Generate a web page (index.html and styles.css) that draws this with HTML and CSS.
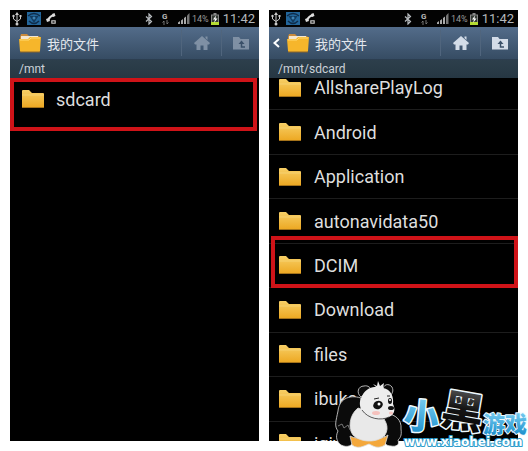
FILE: index.html
```
<!DOCTYPE html>
<html lang="zh-CN">
<head>
    <meta charset="UTF-8">
    <meta name="viewport" content="width=device-width, initial-scale=1.0">
    <title>我的文件</title>
    <link rel="stylesheet" href="styles.css">
</head>
<body>
    <!-- Shared icons -->
    <svg class="sprite" aria-hidden="true">
        <defs>
            <linearGradient id="folderFill" x1="0" y1="0" x2="0" y2="1">
                <stop offset="0" stop-color="#f7cf66" />
                <stop offset="1" stop-color="#eda924" />
            </linearGradient>
            <linearGradient id="blueFill" x1="0" y1="0" x2="0" y2="1">
                <stop offset="0" stop-color="#8fdcfa" />
                <stop offset="1" stop-color="#1188c8" />
            </linearGradient>
            <linearGradient id="blackFill" x1="0" y1="0" x2="0" y2="1">
                <stop offset="0" stop-color="#777" />
                <stop offset="0.5" stop-color="#151515" />
                <stop offset="1" stop-color="#000" />
            </linearGradient>
        </defs>
        <symbol id="folder" viewBox="0 0 22 18">
            <path d="M0 1 Q0 0 1 0 H7 L10 3 H21 Q22 3 22 4 V17 H0 Z" fill="url(#folderFill)" />
            <path d="M0 5 H22" stroke="#f9dc86" stroke-width="1" opacity="0.6" />
            <path d="M0 17.500 H22" stroke="#a5731a" />
        </symbol>
        <symbol id="folder-open" viewBox="0 0 22 19">
            <path d="M1 3 L2 0 H8 L10 2 H20 L21 4 V9 H1 Z" fill="#c98a3c" />
            <path d="M2 2 H19 V7 H2 Z" fill="#f4e6cf" />
            <path d="M0 5 H9 L11 3 H22 L21 17 Q21 18 20 18 H2 Q1 18 1 17 Z" fill="#f6b62b" />
            <path d="M1 6 H10 L12 4 H21" fill="none" stroke="#ffd973" />
            <path d="M1 18 H21" stroke="#8c6428" />
        </symbol>
        <symbol id="home" viewBox="0 0 16 16">
            <path d="M8 1 L16 8 L15 9.500 H13.500 V15 H9.500 V10.500 H6.500 V15 H2.500 V9.500 H1 L0 8 Z M11.500 1.500 H13.500 V5 L11.500 3 Z" fill="currentColor" />
        </symbol>
        <symbol id="folder-up" viewBox="0 0 16 14">
            <path d="M0 1 H6 L7.500 3 H16 V13.500 H0 Z" fill="currentColor" />
            <path d="M12 11 H8.500 V7" fill="none" stroke="#3a5069" stroke-width="1.500" />
            <path d="M5.500 8 L8.500 4.500 L11.500 8 Z" fill="#3a5069" />
        </symbol>
        <symbol id="usb" viewBox="0 0 10 14">
            <path d="M5 2 V12 M1.500 4 V7 L5 9.500 L8.500 7 V4" fill="none" stroke="#ccc" />
            <path d="M5 0 L7 3 H3 Z" fill="#ccc" />
            <circle cx="5" cy="12" r="1.500" fill="#ccc" />
            <circle cx="1.500" cy="4" r="1.200" fill="#ccc" />
            <path d="M7.500 3 H9.500 V5 H7.500 Z" fill="#ccc" />
        </symbol>
        <symbol id="app" viewBox="0 0 14 13">
            <rect width="14" height="13" fill="#23669b" />
            <path d="M1 4 Q7 -1 13 4 M2 9 Q7 14 12 9" fill="none" stroke="#102c49" stroke-width="1.500" />
            <path d="M2.500 4 L7 11 L11.500 4 Z" fill="#123a5e" />
            <circle cx="7" cy="6" r="1.500" fill="#3f82b4" />
        </symbol>
        <symbol id="call" viewBox="0 0 11 12">
            <path d="M8 2 Q4 3 2 7" fill="none" stroke="#ddd" stroke-width="2" />
            <path d="M6 1 L8.500 0 L9.500 3 L7 4 Z M0 6 L3 5 L4 8 L1 9 Z" fill="#ddd" />
            <rect x="5" y="7" width="5" height="4" rx="1" fill="#999" />
            <circle cx="7.500" cy="9" r="1" fill="#444" />
        </symbol>
        <symbol id="bluetooth" viewBox="0 0 8 12">
            <path d="M1 3.500 L6.500 8.500 L4 11 V1 L6.500 3.500 L1 8.500" fill="none" stroke="#b8bcc0" stroke-width="1.200" />
        </symbol>
        <symbol id="data" viewBox="0 0 7 5">
            <path d="M2 5 V1 M0.500 2.500 L2 1 M5 0 V4 M6.500 2.500 L5 4" fill="none" stroke="#777" />
        </symbol>
        <symbol id="signal" viewBox="0 0 12 11">
            <path d="M0 11 V9.500 L2 8 V11 Z M3 11 V7.500 L5 6 V11 Z M6 11 V5 L8 3.500 V11 Z" fill="#aaa" />
            <path d="M9 11 V2.500 L11.500 0 V11 Z" fill="#777" />
        </symbol>
        <symbol id="battery" viewBox="0 0 8 12">
            <path d="M2.500 0 H5.500 V1.500 H8 V12 H0 V1.500 H2.500 Z" fill="#888" />
            <rect x="1" y="2.500" width="6" height="7" fill="#353b35" />
            <rect x="0" y="9" width="8" height="3" fill="#b4dc32" />
            <path d="M5 2.500 L2 6.500 H4 L3 10 L6.500 5.500 H4.500 Z" fill="#fff" />
        </symbol>
        <symbol id="back" viewBox="0 0 7 10">
            <path d="M6 1 L1.500 5 L6 9" fill="none" stroke="#fff" stroke-width="2" />
        </symbol>
    </svg>

    <main class="screens">
        <section class="phone">
            <div class="status-bar">
                <svg class="icon-usb"><use href="#usb" /></svg>
                <svg class="icon-app"><use href="#app" /></svg>
                <svg class="icon-call"><use href="#call" /></svg>
                <div class="status-right">
                    <svg class="icon-bluetooth"><use href="#bluetooth" /></svg>
                    <span class="network">G<svg><use href="#data" /></svg></span>
                    <svg class="icon-signal"><use href="#signal" /></svg>
                    <span class="charge">14%</span>
                    <svg class="icon-battery"><use href="#battery" /></svg>
                    <span class="clock">11:42</span>
                </div>
            </div>
            <header class="title-bar">
                <svg class="icon-title"><use href="#folder-open" /></svg>
                <h1>我的文件</h1>
                <button class="action" aria-label="Home" disabled><svg><use href="#home" /></svg></button>
                <button class="action action-up" aria-label="Up" disabled><svg><use href="#folder-up" /></svg></button>
            </header>
            <div class="path">/mnt</div>
            <div class="root-item marked">
                <svg class="icon-folder"><use href="#folder" /></svg>
                <span>sdcard</span>
            </div>
        </section>

        <section class="phone">
            <div class="status-bar">
                <svg class="icon-usb"><use href="#usb" /></svg>
                <svg class="icon-app"><use href="#app" /></svg>
                <svg class="icon-call"><use href="#call" /></svg>
                <div class="status-right">
                    <svg class="icon-bluetooth"><use href="#bluetooth" /></svg>
                    <span class="network">G<svg><use href="#data" /></svg></span>
                    <svg class="icon-signal"><use href="#signal" /></svg>
                    <span class="charge">14%</span>
                    <svg class="icon-battery"><use href="#battery" /></svg>
                    <span class="clock">11:42</span>
                </div>
            </div>
            <header class="title-bar has-back">
                <button class="back" aria-label="Back"><svg><use href="#back" /></svg></button>
                <svg class="icon-title"><use href="#folder-open" /></svg>
                <h1>我的文件</h1>
                <button class="action" aria-label="Home"><svg><use href="#home" /></svg></button>
                <button class="action action-up" aria-label="Up"><svg><use href="#folder-up" /></svg></button>
            </header>
            <div class="path">/mnt/sdcard</div>
            <div class="file-view">
                <ul class="file-list">
                    <li><svg class="icon-folder"><use href="#folder" /></svg>AllsharePlayLog</li>
                    <li><svg class="icon-folder"><use href="#folder" /></svg>Android</li>
                    <li><svg class="icon-folder"><use href="#folder" /></svg>Application</li>
                    <li><svg class="icon-folder"><use href="#folder" /></svg>autonavidata50</li>
                    <li class="selected"><svg class="icon-folder"><use href="#folder" /></svg>DCIM</li>
                    <li><svg class="icon-folder"><use href="#folder" /></svg>Download</li>
                    <li><svg class="icon-folder"><use href="#folder" /></svg>files</li>
                    <li><svg class="icon-folder"><use href="#folder" /></svg>ibuka</li>
                    <li><svg class="icon-folder"><use href="#folder" /></svg>iqiyi</li>
                </ul>
            </div>
        </section>

        <!-- Site watermark -->
        <svg class="watermark" viewBox="0 0 194 70">
            <g stroke="#ddd" stroke-width="0.800">
                <path d="M27 17 C14 13 5 19 4 30 C2 40 0 45 4 50 C1 56 3 61 7 64 C13 67 19 65 20 59 L28 50 Z" fill="#0b0b0b" />
                <path d="M53 33 C61 33 68 39 67 48 C68 55 66 57 64 59 C66 64 62 66 57 65 C52 65 50 62 51 58 L48 43 Z" fill="#0b0b0b" />
                <path d="M16 55 C23 59 47 60 54 54 L51 64 Q45 68 39 65 L35 63 L30 65 Q23 68 18 64 Z" fill="#f4a83b" />
                <path d="M24 27 C15 34 14 48 19 54 C27 62 44 62 51 54 C56 46 51 38 46 34 Z" fill="#e9e9e9" />
                <path d="M27 16 C22 12 24 5 30 5 C34 4 37 7 37 9 Z" fill="#0b0b0b" />
                <path d="M49 9 C49 3 55 2 58 6 C60 10 58 13 56 15 Z" fill="#0b0b0b" />
            </g>
            <path d="M28 15 C32 7 38 6 42 6 L39 3 L43 5 L44 0 L46 5 L50 2 L49 7 C57 8 60 16 59 23 C62 29 60 34 55 36 C47 40 34 38 29 31 C25 26 25 20 28 15 Z" fill="#ededed" />
            <path d="M28 29 C34 38 47 40 55 36" fill="none" stroke="#333" stroke-width="0.800" />
            <ellipse cx="44" cy="24" rx="5" ry="4" transform="rotate(-25 44 24)" fill="#111" />
            <circle cx="45" cy="23" r="1.500" fill="#fff" />
            <ellipse cx="56" cy="20" rx="2" ry="3" fill="#111" />
            <circle cx="56" cy="19" r="1" fill="#fff" />
            <ellipse cx="57" cy="27" rx="3" ry="2" fill="#111" />
            <ellipse cx="42" cy="32" rx="4" ry="2" fill="#f5c1bd" />
            <ellipse cx="57" cy="32" rx="2" ry="1.500" fill="#f5c1bd" />
            <path d="M40 18 L45 17 M53 15 L56 15" fill="none" stroke="#222" />
            <path d="M4 45 L8 43 L10 47 L14 44 L16 49" fill="none" stroke="#777" />
            <text class="brand" x="70" y="48" font-size="35" fill="url(#blueFill)" transform="rotate(5 86 32)">小</text>
            <text class="brand" x="108" y="46" font-size="42" fill="url(#blackFill)" transform="rotate(10 129 30)">黑</text>
            <text class="brand brand-small" x="149" y="51" font-size="22" fill="url(#blueFill)">游戏</text>
            <text class="site" x="70" y="65" font-size="12">www.xiaohei.com</text>
        </svg>
    </main>
</body>
</html>
```
FILE: styles.css
```
:root {
    --mark: #cf1318;
    --text: #dedede;
    --bar-top: #536c8a;
    --bar-bottom: #364c63;
}

* {
    box-sizing: border-box;
    margin: 0;
    padding: 0;
}

body {
    background: #fff;
    color: var(--text);
    font-family: Roboto, "Noto Sans CJK SC", sans-serif;
}

svg {
    flex: none;
    display: block;
}

.sprite {
    position: absolute;
    width: 0;
    height: 0;
}

.screens {
    position: relative;
    display: flex;
    gap: 10px;
    padding: 10px;
}

.phone {
    flex: 1;
    min-width: 0;
    background: #000;
}

/* Status bar */
.status-bar {
    display: flex;
    align-items: center;
    gap: 5px;
    height: 17px;
    padding: 0 4px 0 2px;
    background: #030303;
}

.icon-usb { width: 10px; height: 14px; }
.icon-app { width: 14px; height: 13px; }
.icon-call { width: 11px; height: 12px; }
.icon-bluetooth { width: 8px; height: 12px; }
.icon-signal { width: 12px; height: 11px; }
.icon-battery { width: 8px; height: 12px; }

.status-right {
    display: flex;
    align-items: center;
    margin-left: auto;
}

.network {
    width: 8px;
    margin: 0 8px 0 9px;
    color: #bbb;
    font-size: 8px;
    font-weight: 700;
    line-height: 7px;
}

.network svg {
    width: 7px;
    height: 5px;
}

.charge {
    margin: 0 2px;
    color: #999;
    font-size: 9px;
}

.clock {
    margin-left: 4px;
    color: #b4b8bc;
    font-size: 13px;
    line-height: 16px;
}

/* Title bar */
.title-bar {
    display: flex;
    align-items: center;
    height: 33px;
    padding-left: 9px;
    background: linear-gradient(var(--bar-top), var(--bar-bottom));
    border-bottom: 1px solid #2c3e50;
}

.title-bar.has-back {
    padding-left: 0;
}

.icon-title {
    width: 22px;
    height: 19px;
}

.title-bar h1 {
    flex: 1;
    margin-left: 6px;
    color: #e4e8ee;
    font-size: 13px;
    font-weight: 400;
}

.back {
    width: 18px;
    height: 32px;
    padding-left: 4px;
    border: 0;
    background: none;
}

.back svg {
    width: 7px;
    height: 10px;
}

.action {
    display: flex;
    align-items: center;
    justify-content: center;
    width: 40px;
    height: 26px;
    border: 0;
    border-left: 1px solid #50657d;
    background: none;
    color: #d3dce8;
}

.action:disabled {
    color: #7f90a4;
}

.action-up {
    width: 38px;
}

.action svg {
    width: 16px;
    height: 16px;
}

.path {
    height: 18px;
    padding-left: 9px;
    background: linear-gradient(#2d3f4c, #263743);
    color: #ccd2d8;
    font-size: 12px;
    line-height: 18px;
}

/* Folders */
.icon-folder {
    width: 22px;
    height: 18px;
}

.marked {
    border: 4px solid var(--mark);
}

.root-item {
    display: flex;
    gap: 12px;
    height: 53px;
    margin-right: 2px;
    padding: 8px;
    font-size: 18px;
    line-height: 20px;
}

.file-view {
    height: 363px;
    overflow: hidden;
}

.file-list {
    display: grid;
    grid-template-rows: repeat(9, 1fr);
    height: 400px;
    margin-top: -12px;
    list-style: none;
}

.file-list li {
    position: relative;
    display: flex;
    align-items: center;
    gap: 13px;
    padding-left: 10px;
    border-bottom: 1px solid #1d1d1d;
    font-size: 18px;
}

.selected::after {
    content: '';
    position: absolute;
    inset: -8px 0 -1px 2px;
    border: 4px solid var(--mark);
}

/* Watermark */
.watermark {
    position: absolute;
    right: 0;
    bottom: 0;
    width: 194px;
    height: 70px;
}

.brand {
    font-family: "Noto Sans CJK SC", sans-serif;
    font-weight: 900;
    stroke: #eefaff;
    stroke-width: 3px;
    stroke-linejoin: round;
    paint-order: stroke;
}

.brand-small {
    stroke-width: 2px;
}

.site {
    font-family: "DejaVu Sans", sans-serif;
    font-weight: 700;
    fill: #fff;
    stroke: #2c9ccc;
    stroke-width: 2px;
    stroke-linejoin: round;
    paint-order: stroke;
}
```
